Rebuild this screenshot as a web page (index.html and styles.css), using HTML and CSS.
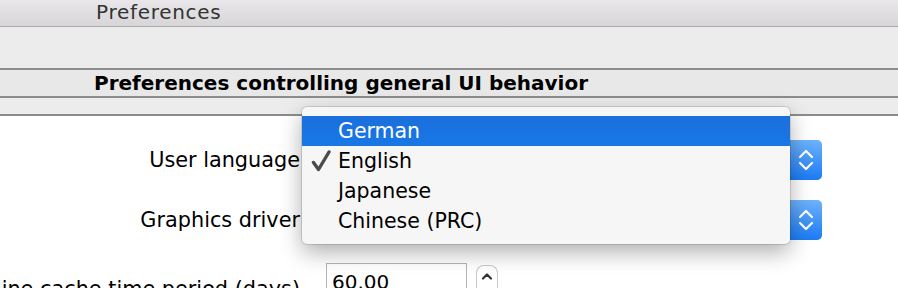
FILE: index.html
```html
<!DOCTYPE html>
<html lang="en">
<head>
  <meta charset="UTF-8">
  <meta name="viewport" content="width=device-width, initial-scale=1.0">
  <title>Preferences</title>
  <link rel="stylesheet" href="styles.css">
</head>
<body>
  <div class="titlebar">
    <span class="title">Preferences</span>
  </div>

  <div class="toolbar"></div>

  <div class="section-header">Preferences controlling general UI behavior</div>
  <div class="section-gap"></div>

  <div class="form">
    <div class="row">
      <div class="label">User language</div>
      <div class="field">
        <div class="popup">
          <span class="popup-arrows">
            <svg width="16" height="24" viewBox="0 0 16 24">
              <polyline points="2,9 8,3 14,9" fill="none" stroke="#fff" stroke-width="2.2" stroke-linecap="round" stroke-linejoin="round"/>
              <polyline points="2,15 8,21 14,15" fill="none" stroke="#fff" stroke-width="2.2" stroke-linecap="round" stroke-linejoin="round"/>
            </svg>
          </span>
        </div>
      </div>
    </div>

    <div class="row">
      <div class="label">Graphics driver</div>
      <div class="field">
        <div class="popup">
          <span class="popup-arrows">
            <svg width="16" height="24" viewBox="0 0 16 24">
              <polyline points="2,9 8,3 14,9" fill="none" stroke="#fff" stroke-width="2.2" stroke-linecap="round" stroke-linejoin="round"/>
              <polyline points="2,15 8,21 14,15" fill="none" stroke="#fff" stroke-width="2.2" stroke-linecap="round" stroke-linejoin="round"/>
            </svg>
          </span>
        </div>
      </div>
    </div>

    <div class="row row-input">
      <div class="label">Offline cache time period (days)</div>
      <div class="field">
        <div class="number-input">60.00</div>
        <div class="stepper">
          <svg width="12" height="8" viewBox="0 0 12 8">
            <polyline points="2,6.5 6,2.5 10,6.5" fill="none" stroke="#333" stroke-width="2.2" stroke-linecap="round" stroke-linejoin="round"/>
          </svg>
        </div>
      </div>
    </div>
  </div>

  <ul class="menu">
    <li class="menu-item selected">German</li>
    <li class="menu-item">
      <svg class="check" width="20" height="22" viewBox="0 0 20 22">
        <path d="M2.5 12.5 L7.5 19.5 L18 2" fill="none" stroke="#4a4a4a" stroke-width="3.4" stroke-linecap="round" stroke-linejoin="round"/>
      </svg>
      English
    </li>
    <li class="menu-item">Japanese</li>
    <li class="menu-item">Chinese (PRC)</li>
  </ul>
</body>
</html>
```

FILE: styles.css
```css
body {
  margin: 0;
  width: 898px;
  height: 288px;
  overflow: hidden;
  background-color: #fff;
  font-family: "DejaVu Sans", Verdana, sans-serif;
  font-size: 20px;
  color: #000;
}

.titlebar {
  height: 26px;
  padding-left: 96px;
  background: linear-gradient(#e9e7e9, #d7d5d7);
  border-bottom: 1px solid #a9a9a9;
}

.title {
  display: block;
  line-height: 24px;
  letter-spacing: 0.7px;
  color: #333;
}

.toolbar {
  height: 41px;
  background-color: #ececec;
}

.section-header {
  height: 26px;
  line-height: 26px;
  padding-left: 94px;
  background-color: #e8e8e8;
  border-top: 2px solid #8c8c8c;
  border-bottom: 2px solid #8c8c8c;
  font-weight: bold;
  font-size: 20px;
}

.section-gap {
  height: 16px;
  background-color: #ececec;
  border-bottom: 2px solid #8c8c8c;
}

.form {
  padding-top: 24px;
  display: flex;
  flex-direction: column;
  gap: 20px;
}

.row {
  display: flex;
  align-items: center;
  height: 40px;
}

.label {
  width: 300px;
  flex-shrink: 0;
  display: flex;
  justify-content: flex-end;
  white-space: nowrap;
  font-size: 20.8px;
}

.field {
  display: flex;
  align-items: flex-start;
  margin-left: 26px;
}

.popup {
  width: 496px;
  height: 40px;
  display: flex;
  justify-content: flex-end;
  box-sizing: border-box;
  border: 1px solid #c6c6c6;
  border-radius: 5px;
  background-color: #fff;
}

.popup-arrows {
  width: 32px;
  height: 40px;
  margin: -1px -1px -1px 0;
  display: flex;
  align-items: center;
  justify-content: center;
  border-radius: 0 5px 5px 0;
  background: linear-gradient(#6db2fc, #1b7bf4);
}

.row-input {
  align-items: flex-start;
  padding-top: 3px;
}

.row-input .label {
  padding-top: 14px;
}

.number-input {
  width: 141px;
  height: 30px;
  box-sizing: border-box;
  border: 1px solid #b4b4b4;
  border-bottom: none;
  padding: 6px 0 0 5px;
}

.stepper {
  width: 22px;
  height: 28px;
  margin: 2px 0 0 9px;
  box-sizing: border-box;
  border: 1px solid #c8c8c8;
  border-bottom: none;
  border-radius: 8px 8px 0 0;
  display: flex;
  justify-content: center;
  padding-top: 6px;
}

.menu {
  position: absolute;
  left: 302px;
  top: 107px;
  width: 488px;
  margin: 0;
  padding: 9px 0 8px;
  list-style: none;
  box-sizing: border-box;
  background-color: #f6f6f6;
  border-radius: 5px;
  box-shadow: 0 0 0 1px rgba(0, 0, 0, 0.12), 0 8px 22px rgba(0, 0, 0, 0.32);
  font-size: 20.5px;
}

.menu-item {
  height: 30px;
  line-height: 30px;
  padding-left: 36px;
  position: relative;
}

.menu-item.selected {
  background: linear-gradient(#1a6fdc, #1878e6);
  color: #fff;
}

.check {
  position: absolute;
  left: 9px;
  top: 4px;
}
```
